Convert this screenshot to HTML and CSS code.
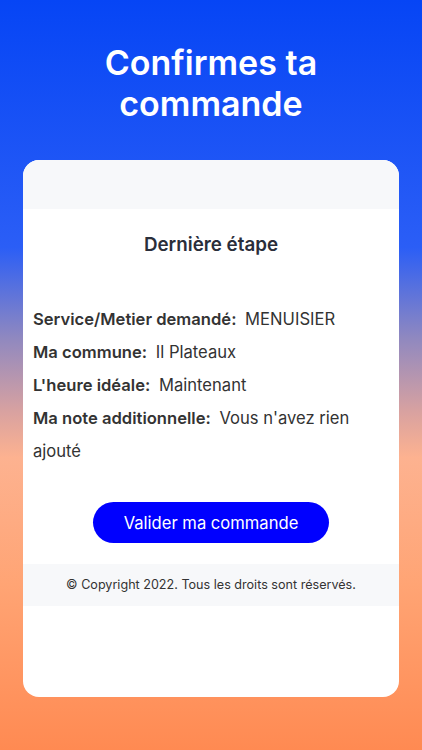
FILE: index.html
```html
<!DOCTYPE html>
<html lang="fr">
<head>
    <meta charset="UTF-8">
    <meta name="viewport" content="width=device-width, initial-scale=1.0">
    <title>Confirmes ta commande</title>
    <link rel="stylesheet" href="styles.css">
</head>
<body>
    <h1>Confirmes ta commande</h1>
    <div class="card">
        <div class="card-top"></div>
        <h2>Dernière étape</h2>
        <div class="recap">
            <p><b>Service/Metier demandé:</b> MENUISIER</p>
            <p><b>Ma commune:</b> Il Plateaux</p>
            <p><b>L'heure idéale:</b> Maintenant</p>
            <p><b>Ma note additionnelle:</b> Vous n'avez rien ajouté</p>
        </div>
        <button class="submit">Valider ma commande</button>
        <footer>© Copyright 2022. Tous les droits sont réservés.</footer>
    </div>
</body>
</html>
```

FILE: styles.css
```css
html, body {
    height: 100%;
}
body {
    font-family: Inter, "Noto Sans", sans-serif;
    margin: 0;
    padding: 0;
    background: linear-gradient(180deg, #0645f5 0%, #2b5ef6 33%, #8f88c0 45%, #d9a2a0 55%, #fdb290 61%, #ffa474 78%, #ff8a52 100%);
    display: flex;
    flex-direction: column;
    align-items: center;
}
h1 {
    color: white;
    font-size: 34px;
    font-weight: 600;
    line-height: 41px;
    text-align: center;
    margin: 42px 0 0;
    width: 260px;
}
.card {
    background: white;
    width: 376px;
    height: 537px;
    margin-top: 36px;
    border-radius: 16px;
    overflow: hidden;
    display: flex;
    flex-direction: column;
}
.card-top {
    height: 49px;
    background: #f7f8fa;
}
h2 {
    color: #2a2e3a;
    font-size: 18.8px;
    font-weight: 600;
    text-align: center;
    margin: 24px 0 0;
}
.recap {
    padding: 0 10px;
    margin-top: 47px;
}
.recap p {
    margin: 0;
    font-size: 16.6px;
    line-height: 33px;
    color: #333;
}
.recap b {
    font-weight: 600;
    margin-right: 4px;
}
.submit {
    align-self: center;
    width: 236px;
    height: 41px;
    margin-top: 34px;
    background: #0000ff;
    color: white;
    font-family: inherit;
    font-size: 16.6px;
    border: none;
    border-radius: 21px;
}
footer {
    background: #f7f8fa;
    margin-top: 21px;
    height: 42px;
    line-height: 42px;
    text-align: center;
    font-size: 12.6px;
    color: #333;
}
```
